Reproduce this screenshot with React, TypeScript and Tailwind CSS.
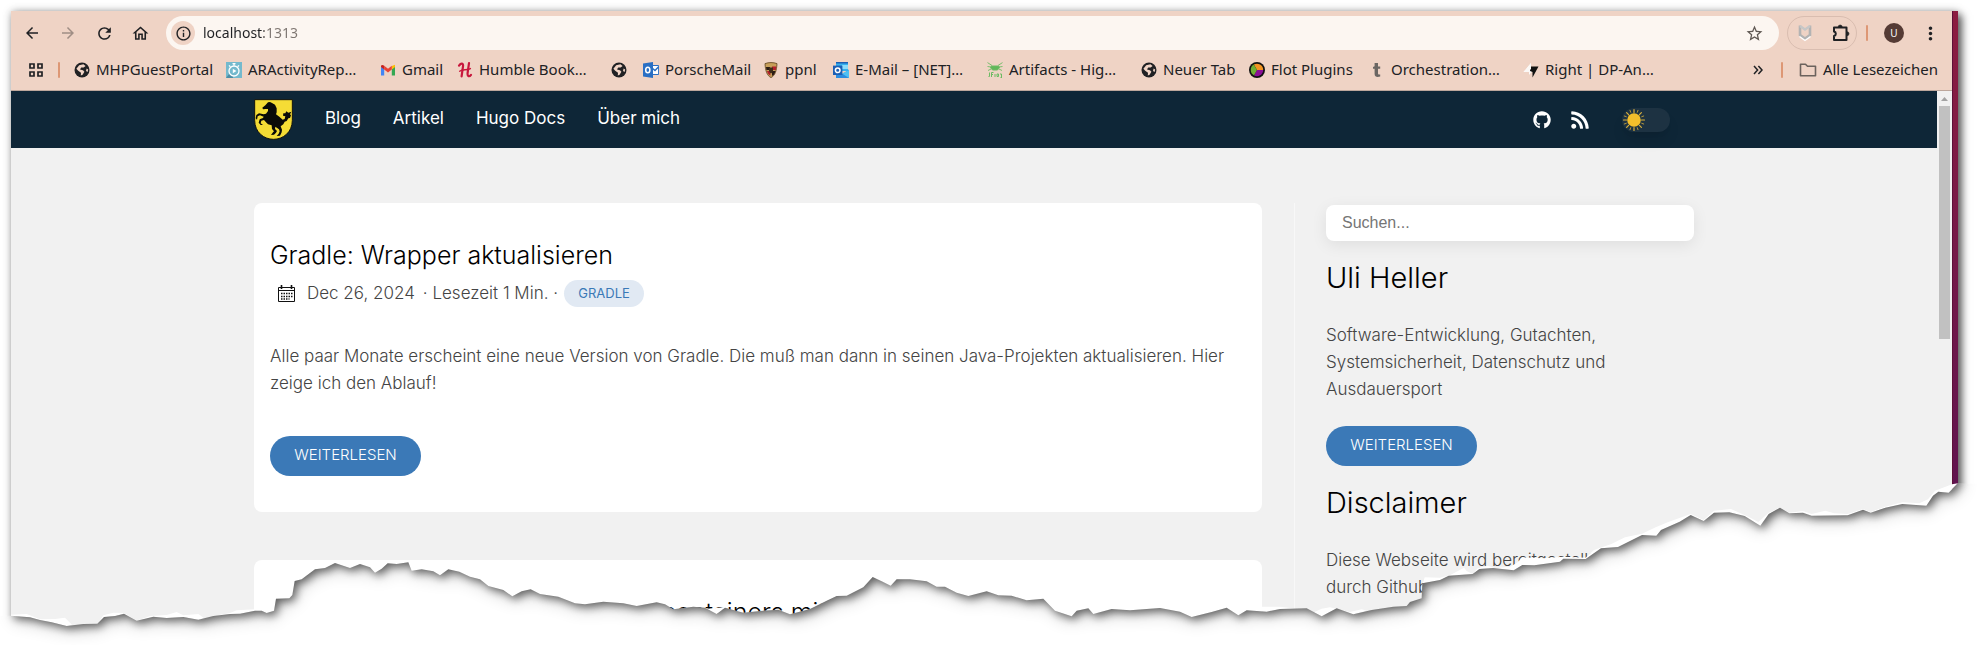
import type { ReactNode } from "react";
import {
  MdArrowBack,
  MdArrowForward,
  MdInfoOutline,
  MdMoreVert,
  MdOutlineHome,
  MdRefresh,
  MdStarOutline,
} from "react-icons/md";
import { FaGithub, FaRss } from "react-icons/fa";

/* ---------- Favicons ---------- */

const Globe = () => (
  <svg viewBox="0 0 16 16" className="size-4">
    <circle cx="8" cy="8" r="7.5" fill="#202124" />
    <path d="M5.2 3.2 9.4 2.2 11.6 4 9.6 5.6 7.2 5.4 6 7.6 9 8.2 10.4 9.8 8.6 12.8 6.8 13.6 7 10.8 4.2 8.8 2.4 6.8Z" fill="#f0d4c6" />
    <path d="M12.6 6.6 14.2 7.4 13.6 10 12 9Z" fill="#f0d4c6" />
  </svg>
);

const Stopwatch = () => (
  <svg viewBox="0 0 16 16" className="size-4">
    <path d="M0 0h16v16H0z" fill="#74b9cd" />
    <path d="M0 16 3 12l4 2v2Z" fill="#4d8ea6" />
    <circle cx="8" cy="9" r="5" fill="none" stroke="#fff" strokeWidth="1.3" />
    <path d="M6.5 1.6h3M8 1.6v2M3 3.4l1.4 1.4M13 3.4l-1.4 1.4" stroke="#fff" strokeWidth="1.3" />
    <path d="M6.8 6.8 10.4 9l-3.6 2.2Z" fill="#fff" />
  </svg>
);

const Gmail = () => (
  <svg viewBox="0 0 16 16" className="size-4">
    <path d="M1 4.4V13.5h3.2V7.2Z" fill="#4285f4" />
    <path d="M15 4.4V13.5h-3.2V7.2Z" fill="#34a853" />
    <path d="M11.8 4 15 2.8V5l-3.2 2.6Z" fill="#fbbc04" />
    <path d="M4.2 3.8 8 6.8l3.8-3V7.6L8 10.6 4.2 7.6Z" fill="#ea4335" />
    <path d="M1 4.4C1 2.6 2.8 2.4 4.2 3.8V7.6L1 5Z" fill="#c5221f" />
  </svg>
);

const Humble = () => (
  <svg viewBox="0 0 16 16" className="size-4" fill="none" stroke="#c8173c" strokeLinecap="round">
    <path d="M2 3.600C4 .8 6.600 .8 6 4.4L4.600 14.400" strokeWidth="2.200" />
    <path d="M12 1.200 10.600 11C10.200 14.800 12.400 15 14 12.800" strokeWidth="2.200" />
    <path d="M2.600 9.200C6 6.800 9.600 8.800 13.400 6.600" strokeWidth="1.400" />
  </svg>
);

const OutlookClassic = () => (
  <svg viewBox="0 0 16 16" className="size-4">
    <path d="M8 3.5h7.6v9H8z" fill="#fff" stroke="#2a6fc4" />
    <path d="m9 6 3 2.6L15.4 5" fill="none" stroke="#2a6fc4" strokeWidth="1.4" />
    <path d="M0 1.6 10 0v16L0 14.4Z" fill="#2a6fc4" />
    <ellipse cx="4.8" cy="8" rx="2.1" ry="2.8" fill="none" stroke="#fff" strokeWidth="1.5" />
  </svg>
);

const Crest = () => (
  <svg viewBox="0 0 16 16" className="size-4">
    <path d="M2 1.6C6 .2 10 .2 14 1.6 13.6 9 12 13.6 8 15.6 4 13.6 2.4 9 2 1.6Z" fill="#c79f5a" stroke="#5e4320" strokeWidth=".8" />
    <path d="M3 5h4v3H3.4ZM9 9h3.6l-1.4 3.4L9 14Z" fill="#2a1a14" />
    <path d="M9 4.4h4.2L13 8H9ZM4 9h3.4v4.6C5.4 12.6 4.6 11 4 9Z" fill="#b3202c" />
    <path d="M6 5.6h4V9c-.4 1.2-1 1.8-2 2.4C7 10.800 6.400 10.200 6 9Z" fill="#3f2c18" />
  </svg>
);

const Outlook = () => (
  <svg viewBox="0 0 16 16" className="size-4">
    <path d="M3 0h12v9H3z" fill="#35b0ee" />
    <path d="M3 0h12v1.500H3z" fill="#1c5fb4" />
    <path d="M9 3h6v4H9z" fill="#8bdcfb" />
    <path d="M3 7.600 9.600 12 16 7.600V16H3Z" fill="#2b8de0" />
    <path d="M9 11.600 16 16V8Z" fill="#4fc0f3" />
    <path d="M0 3.600h9.400V13H0z" fill="#1c5fb4" />
    <circle cx="4.700" cy="8.300" r="2.300" fill="none" stroke="#fff" strokeWidth="1.500" />
  </svg>
);

const Frog = () => (
  <svg viewBox="0 0 16 16" className="size-4" fill="none" stroke="#6cbb63">
    <path d="M.5.600 5 3.500M15.500.600 11 3.500M.5 4.500 4 5M15.500 4.500 12 5M1 8.500l3-1.500M15 8.500l-3-1.500" strokeWidth=".9" />
    <path d="M4.500 4h7l1 1.500-2 2.500h-5l-2-2.500Z" fill="#62b75a" />
    <path d="M2.500 10.500v4h-1M4.500 15v-4.500h2M4.500 12.500h1.500M8 15v-3M10 12h1.500v2.500H10ZM13 12h1.500v4H13" strokeWidth="1" />
  </svg>
);

const Flot = () => (
  <svg viewBox="0 0 16 16" className="size-4">
    <circle cx="8" cy="8" r="8" fill="#111" />
    <path d="M8 8 4.800 2.600A6.200 6.200 0 0 1 14.200 8Z" fill="#f29423" />
    <path d="M8 8h6.200A6.200 6.200 0 0 1 5 13.400Z" fill="#8b0f96" />
    <path d="M8 8 5 13.400A6.200 6.200 0 0 1 4.800 2.600Z" fill="#6fae35" />
  </svg>
);

const LetterT = () => (
  <svg viewBox="0 0 16 16" className="size-4">
    <path d="M5.600 1h3.400v3.500h2.200V6.700H9v4.600c0 1.200.8 1.500 2.200 1.100v2.200C8 15.600 5.600 14.800 5.600 12V6.700H4V4.900L5.600 4.200Z" fill="#6b6663" />
  </svg>
);

const Bolt = () => (
  <svg viewBox="0 0 16 16" className="size-4">
    <path d="M8 1v6h3L6 13v-3H.5Z" fill="#fbf8f6" />
    <path d="M7.500 4.500H15.500L9.500 15.500V10L7 9Z" fill="#111" />
    <path d="M8 1v6L4 10H.5Z" fill="#fbf8f6" />
  </svg>
);

/* ---------- Other drawings ---------- */

const Folder = () => (
  <svg viewBox="0 0 18 16" className="h-4 w-[18px]" fill="none" stroke="#6b625d" strokeWidth="1.600">
    <path d="M1.500 2.300h5l2 2h8v9.400h-15Z" strokeLinejoin="round" />
  </svg>
);

const Puzzle = () => (
  <svg viewBox="0 0 18 18" className="size-[18px]">
    <path d="M2 3.500h12.500v12.500H2V12a2.300 2.300 0 0 0 0-4.500Z" fill="none" stroke="#202124" strokeWidth="2" strokeLinejoin="round" />
    <path d="M6.200 3a2 2 0 0 1 4 0ZM15 7.700a2 2 0 0 1 0 4Z" fill="#202124" stroke="#202124" strokeWidth=".6" />
  </svg>
);

const McShield = () => (
  <svg viewBox="0 0 14 18" className="h-[18px] w-3.5" fill="none">
    <path d="M2 1.500V11l5 3.500L12 11V1.500" stroke="#b3b3b3" strokeWidth="2.600" />
    <path d="M2 2 7 5.500 12 2" stroke="#c7c7c7" strokeWidth="2.400" />
    <path d="M1.500 12.500 7 16.500l5.500-4" stroke="#fff" strokeWidth="1.400" />
  </svg>
);

const Shield = () => (
  <svg viewBox="0 0 117 123" className="h-[41px] w-[39px]">
    <path d="M2 2h113v62c0 36-28 57-56.500 57S2 100 2 64Z" fill="#f5dc35" stroke="#14140f" strokeWidth="3" />
    <path
      d="M27 31 25 26 34 19 42 10 48 9 54 12 63 17 68 28 68 40 66 46 76 53 86 62 92 60 94 52 87 50 88 43 94 43 97 37 103 41 112 38 108 46 111 49 108 57 103 58 98 66 92 68 88 76 80 82 84 92 83 100 78 110 68 111 74 104 77 97 75 91 64 83 63 90 69 96 66 101 60 107 51 108 57 100 60 97 54 90 53 79 42 76 36 70 30 63 22 65 20 73 27 78 20 78 14 71 17 61 27 57 29 53 18 49 11 52 9 62 5 58 7 48 15 43 29 46 36 44 42 36 42 30 35 30Z"
      fill="#0a0a08"
    />
  </svg>
);

const Sun = () => (
  <svg viewBox="0 0 24 24" className="size-6">
    <g stroke="#d9b03a" strokeWidth="1.200" strokeLinecap="round">
      <path d="M12 1.500v3M12 19.500v3M1.500 12h3M19.500 12h3M4.600 4.600l2 2M17.400 17.400l2 2M4.600 19.400l2-2M17.400 6.600l2-2" />
      <path d="M8 2.300l.7 2M15.300 19.700l.7 2M2.300 16l2-.7M19.700 8.700l2-.7M2.300 8l2 .7M19.700 15.300l2 .7M8 21.700l.7-2M15.300 4.300l.7-2" strokeWidth=".8" />
    </g>
    <circle cx="12" cy="12" r="6.800" fill="#f4bf2b" />
  </svg>
);

const Calendar = () => (
  <svg viewBox="0 0 17 17" className="size-[17px]" fill="none" stroke="#111">
    <path d="M.5 2.500h16v14H.5ZM.5 5.500h16" />
    <path d="M3.500 0v4M13.500 0v4" strokeWidth="1.600" />
    <path d="M3 8.500h11.500M3 11.500h11.500M3 14h8.500" strokeWidth="1.500" strokeDasharray="1.500 1" />
  </svg>
);

/* ---------- Torn paper edge ---------- */

type Point = [number, number];

const section = (dx: number, dy: number, sx: number, pts: Point[]): Point[] =>
  pts.map(([x, y]) => [Math.round(x * sx + dx), y + dy]);

const outerEdge: Point[] = [
  ...section(0, 0, 1, [
    [33, 407], [90, 412], [120, 420], [155, 427], [200, 438], [250, 432], [292, 431], [312, 411], [345, 408], [372, 401],
    [410, 422], [460, 410], [500, 414], [550, 411], [595, 419], [640, 408], [690, 402], [720, 401], [765, 392], [785, 392],
    [800, 399], [822, 392], [828, 356], [868, 355], [877, 345], [884, 303], [905, 298], [945, 268], [975, 264], [1005, 249],
    [1050, 264], [1080, 252], [1110, 262], [1125, 278], [1145, 266], [1163, 250], [1190, 252], [1225, 247], [1235, 272],
    [1265, 268], [1300, 274], [1320, 286], [1345, 268], [1378, 275], [1410, 290],
  ]),
  ...section(1440, 0, 1, [
    [0, 298], [25, 318], [70, 330], [97, 349], [125, 334], [152, 328], [180, 342], [235, 350], [285, 370], [315, 373],
    [370, 365], [430, 370], [470, 378], [530, 367], [555, 373], [580, 388], [640, 380], [675, 383], [710, 402], [735, 383],
    [790, 398], [840, 393], [895, 389], [930, 403], [990, 387], [1040, 362], [1070, 348], [1100, 347], [1150, 322],
    [1178, 291], [1205, 304], [1232, 317], [1250, 298], [1290, 298], [1340, 304], [1370, 320], [1395, 320], [1430, 338],
  ]),
  ...section(2880, 0, 1, [
    [25, 348], [80, 334], [115, 346], [155, 347], [200, 361], [250, 356], [285, 392], [335, 409], [350, 392], [385, 385],
    [400, 402], [455, 387], [510, 391], [600, 384], [660, 395], [695, 411], [755, 396], [800, 383], [835, 406], [860, 391],
    [920, 395], [960, 387], [1040, 385], [1085, 409], [1130, 385], [1180, 403], [1235, 390], [1300, 380], [1340, 378],
    [1350, 366], [1385, 355], [1387, 310],
  ]),
  ...section(4320, -120, 1.0274, [
    [0, 420], [25, 407], [95, 402], [115, 387], [155, 384], [215, 391], [240, 375], [275, 376], [350, 365], [360, 356],
    [425, 357], [470, 325], [520, 321], [590, 285], [632, 287], [645, 270], [700, 245], [732, 225], [770, 243], [800, 218],
    [845, 217], [890, 228], [935, 257], [960, 222], [993, 203], [1020, 220], [1060, 218], [1085, 227], [1190, 226],
    [1235, 209], [1258, 218], [1300, 203], [1350, 192], [1420, 197], [1440, 167], [1455, 155], [1485, 158], [1513, 130],
  ]),
];

const paperFibres: Point[][] = [
  section(0, 0, 1, [[33, 404], [80, 402], [120, 418], [165, 417], [195, 413], [216, 434], [200, 438], [155, 427], [120, 422], [90, 412], [33, 409]]),
  section(0, 0, 1, [[296, 428], [310, 406], [340, 398], [372, 399], [410, 422], [372, 403], [345, 408], [314, 412]]),
  section(0, 0, 1, [[410, 422], [450, 408], [500, 405], [530, 396], [550, 406], [595, 402], [612, 414], [595, 419], [550, 411], [500, 414]]),
  section(0, 0, 1, [[640, 408], [690, 399], [710, 391], [765, 388], [765, 392], [720, 401], [690, 403]]),
  section(1440, 0, 1, [[672, 384], [690, 386], [728, 382], [735, 385], [710, 402]]),
  section(2880, 0, 1, [[906, 380], [960, 380], [1010, 386], [960, 389], [920, 396], [906, 394]]),
  section(2880, 0, 1, [[1055, 400], [1085, 386], [1110, 382], [1135, 388], [1170, 396], [1205, 388], [1220, 392], [1180, 403], [1150, 400], [1110, 402], [1085, 409]]),
  section(4320, -120, 1.0274, [
    [-50, 430], [-45, 412], [0, 413], [30, 405], [70, 383], [78, 393], [95, 402], [110, 385], [140, 377], [160, 384],
    [205, 380], [225, 368], [240, 352], [300, 355], [360, 350], [425, 353], [450, 330], [500, 312], [540, 292], [590, 281],
    [630, 262], [665, 247], [732, 222], [770, 240], [800, 212], [850, 207], [900, 230], [930, 246], [960, 218], [993, 203],
    [1020, 218], [1060, 213], [1085, 222], [1125, 212], [1150, 220], [1190, 222], [1235, 207], [1258, 216], [1300, 200],
    [1350, 187], [1400, 190], [1425, 178], [1445, 152], [1495, 133], [1513, 130], [1485, 158], [1455, 157], [1420, 197],
    [1350, 194], [1300, 205], [1258, 220], [1235, 211], [1190, 228], [1085, 229], [1020, 222], [993, 205], [960, 224],
    [935, 259], [890, 230], [845, 219], [800, 220], [770, 245], [732, 227], [700, 247], [645, 272], [632, 289], [590, 287],
    [520, 323], [470, 327], [425, 359], [360, 358], [350, 367], [275, 378], [240, 377], [215, 393], [155, 386], [115, 389],
    [95, 404], [25, 409], [0, 422],
  ]),
];

const toPoints = (pts: Point[]) => pts.map((p) => p.join(",")).join(" ");

const edgePoints = toPoints(outerEdge);

const TornEdge = () => (
  <svg
    viewBox="0 0 5931 495"
    preserveAspectRatio="none"
    aria-hidden="true"
    className="pointer-events-none absolute inset-x-0 bottom-0 h-[165px] w-full"
  >
    <defs>
      <clipPath id="below">
        <polygon points={`0,407 ${edgePoints} 5931,10 5931,495 0,495`} />
      </clipPath>
      <filter id="soft" x="-5%" y="-50%" width="110%" height="200%">
        <feGaussianBlur stdDeviation="13" />
      </filter>
      <filter id="haze" x="-5%" y="-50%" width="110%" height="200%">
        <feGaussianBlur stdDeviation="26" />
      </filter>
    </defs>
    {paperFibres.map((f, i) => (
      <polygon key={i} points={toPoints(f)} fill="#fff" />
    ))}
    <g clipPath="url(#below)">
      <path d="M0 0h5931v495H0z" fill="#fff" />
      <polygon points={`33,-300 ${edgePoints} 5874,-300`} transform="translate(9 15)" fill="#000" opacity=".2" filter="url(#haze)" />
      <polygon points={`33,-300 ${edgePoints} 5874,-300`} transform="translate(9 9)" fill="#000" opacity=".55" filter="url(#soft)" />
    </g>
  </svg>
);

/* ---------- Browser chrome ---------- */

const IconButton = ({ label, children, dim = false }: { label: string; children: ReactNode; dim?: boolean }) => (
  <button type="button" aria-label={label} className={dim ? "flex size-9 items-center justify-center text-[#a08e85]" : "flex size-9 items-center justify-center text-[#202124]"}>
    {children}
  </button>
);

const bookmarks: { icon: ReactNode; text?: string; width: string }[] = [
  { icon: <Globe />, text: "MHPGuestPortal", width: "w-[136px]" },
  { icon: <Stopwatch />, text: "ARActivityRep…", width: "w-[138px]" },
  { icon: <Gmail />, text: "Gmail", width: "w-[61px]" },
  { icon: <Humble />, text: "Humble Book…", width: "w-[138px]" },
  { icon: <Globe />, width: "w-4" },
  { icon: <OutlookClassic />, text: "PorscheMail", width: "w-[104px]" },
  { icon: <Crest />, text: "ppnl", width: "w-[54px]" },
  { icon: <Outlook />, text: "E-Mail – [NET]…", width: "w-[138px]" },
  { icon: <Frog />, text: "Artifacts - Hig…", width: "w-[138px]" },
  { icon: <Globe />, text: "Neuer Tab", width: "w-[92px]" },
  { icon: <Flot />, text: "Flot Plugins", width: "w-[104px]" },
  { icon: <LetterT />, text: "Orchestration…", width: "w-[138px]" },
  { icon: <Bolt />, text: "Right | DP-An…", width: "w-[138px]" },
];

const Divider = () => <span className="h-4 w-0.5 rounded-full bg-[#dd9775]" />;

const Chrome = () => (
  <header className="border-b border-[#bda79c] bg-[#efd3c5] font-['Noto_Sans',sans-serif] text-[15px] text-[#202124]">
    <div className="flex items-center pt-1 pr-1 pl-[3px]">
      <nav aria-label="Navigation" className="flex">
        <IconButton label="Zurück"><MdArrowBack size={18} /></IconButton>
        <IconButton label="Vorwärts" dim><MdArrowForward size={18} /></IconButton>
        <IconButton label="Neu laden"><MdRefresh size={19} /></IconButton>
        <IconButton label="Startseite"><MdOutlineHome size={19} /></IconButton>
      </nav>
      <div className="ml-2 flex h-[34px] flex-1 items-center rounded-full bg-[#fcf6f1] pr-[15px] pl-[5px]">
        <button type="button" aria-label="Websiteinformationen" className="flex size-6 items-center justify-center rounded-full bg-[#efd3c5]">
          <MdInfoOutline size={17} />
        </button>
        <input
          aria-label="Adresse"
          defaultValue="localhost:1313"
          className="ml-2 min-w-0 flex-1 bg-[linear-gradient(to_right,#202124_61px,#7d7570_61px)] bg-clip-text text-sm text-transparent outline-none"
        />
        <button type="button" aria-label="Lesezeichen hinzufügen" className="text-[#5f5853]"><MdStarOutline size={19} /></button>
      </div>
      <div className="ml-2 flex h-[34px] w-[70px] items-center justify-between rounded-full border border-[#d9bdb0] pr-1.5 pl-2.5">
        <button type="button" aria-label="McAfee"><McShield /></button>
        <button type="button" aria-label="Erweiterungen"><Puzzle /></button>
      </div>
      <div className="flex items-center pl-[9px]">
        <Divider />
        <button type="button" aria-label="Profil" className="ml-4 flex size-5 items-center justify-center rounded-full bg-[#553b35] text-[10px] text-white">U</button>
        <span className="ml-2"><IconButton label="Menü"><MdMoreVert size={21} /></IconButton></span>
      </div>
    </div>
    <div className="flex h-[39px] items-center pr-3.5 pb-0.5 pl-[17px]">
      <button type="button" aria-label="Apps">
        <svg viewBox="0 0 16 16" className="size-4" fill="none" stroke="#202124" strokeWidth="1.700">
          <path d="M2 2h4v4H2zM10 2h4v4h-4zM2 10h4v4H2zM10 10h4v4h-4z" />
        </svg>
      </button>
      <span className="mr-[14px] ml-[14px] flex"><Divider /></span>
      <ul className="flex min-w-0 flex-1 gap-4 overflow-hidden">
        {bookmarks.map((b, i) => (
          <li key={i} className={`${b.width} shrink-0`}>
            <a href="#" aria-label={b.text ?? "Lesezeichen"} className="flex h-6 items-center gap-1.5 whitespace-nowrap">
              <span className="shrink-0">{b.icon}</span>
              {b.text}
            </a>
          </li>
        ))}
      </ul>
      <button type="button" aria-label="Weitere Lesezeichen" className="mr-[18px]">
        <svg viewBox="0 0 10 10" className="size-2.5" fill="none" stroke="#202124" strokeWidth="1.500">
          <path d="m1 1 3.600 4L1 9M5.400 1 9 5 5.400 9" />
        </svg>
      </button>
      <Divider />
      <a href="#" className="ml-4 flex items-center gap-1.5 whitespace-nowrap"><Folder />Alle Lesezeichen</a>
    </div>
  </header>
);

/* ---------- Website ---------- */

const ReadMore = () => (
  <a href="#" className="flex h-10 w-[151px] items-center justify-center rounded-full bg-[#3b79b7] pb-0.5 text-[15px] font-light text-white">WEITERLESEN</a>
);

const SiteNav = () => (
  <div className="bg-[#0e2637]">
    <div className="mx-auto flex h-[57px] max-w-[1440px] items-center">
      <a href="#" aria-label="Startseite"><Shield /></a>
      <nav className="ml-8 flex flex-1 gap-8 pb-0.5 text-[17px] text-white">
        <a href="#">Blog</a>
        <a href="#">Artikel</a>
        <a href="#">Hugo Docs</a>
        <a href="#">Über mich</a>
      </nav>
      <div className="flex items-center text-white">
        <a href="#" aria-label="GitHub"><FaGithub size={18} /></a>
        <a href="#" aria-label="RSS" className="ml-[19px]"><FaRss size={20} /></a>
        <label className="mr-6 ml-8 flex h-6 w-12 cursor-pointer items-center rounded-full bg-[#1d3242] shadow-lg">
          <input type="checkbox" aria-label="Dunkles Design" className="sr-only" />
          <Sun />
        </label>
      </div>
    </div>
  </div>
);

const SidebarBlock = ({ title, text, action = false }: { title: string; text: string; action?: boolean }) => (
  <section className="pt-[17px]">
    <h2 className="text-[29px] leading-10 font-light text-black">{title}</h2>
    <p className="mt-6 mb-[23px] pr-16 text-[17px] leading-[27px] font-light">{text}</p>
    {action && <ReadMore />}
  </section>
);

const Page = () => (
  <div className="min-w-0 flex-1 bg-[#f1f1f1] font-['Inter',sans-serif] text-[#444]">
    <SiteNav />
    <div className="mx-auto flex max-w-[1440px] pt-[55px]">
      <main className="flex w-[70%] flex-col gap-12">
        <article className="rounded-lg bg-white px-4 pt-8 pb-9">
          <h2 className="text-[25px] leading-10 font-light text-black">Gradle: Wrapper aktualisieren</h2>
          <div className="mt-[5px] flex h-[27px] items-center pl-2 text-[17px] font-light">
            <Calendar />
            <span className="ml-3">Dec 26, 2024</span>
            <span className="mr-1.5 ml-2">· Lesezeit 1 Min. ·</span>
            <a href="#" className="flex h-[27px] w-20 items-center justify-center rounded-full bg-[#e1e9f3] text-[13px] font-normal text-[#3b79b7]">GRADLE</a>
          </div>
          <p className="mt-9 mb-[39px] text-[17px] leading-[27px] font-light">
            Alle paar Monate erscheint eine neue Version von Gradle. Die muß man dann in seinen Java-Projekten aktualisieren. Hier zeige ich den Ablauf!
          </p>
          <ReadMore />
        </article>
        <article className="h-[309px] shrink-0 rounded-lg bg-white px-4 pt-8">
          <h2 className="pl-[392px] text-[25px] leading-10 font-light text-black">containers mit</h2>
        </article>
      </main>
      <aside className="ml-8 flex-1 border-l border-[#f8f8f8] pt-0.5 pl-[31px]">
        <input
          type="search"
          aria-label="Suchen"
          placeholder="Suchen..."
          className="block h-9 w-full rounded-lg bg-white px-4 font-['Liberation_Sans',sans-serif] text-base shadow-[0_4px_16px_rgba(0,0,0,0.08)] outline-none placeholder:text-[#757575]"
        />
        <SidebarBlock title="Uli Heller" text="Software-Entwicklung, Gutachten, Systemsicherheit, Datenschutz und Ausdauersport" action />
        <SidebarBlock title="Disclaimer" text="Diese Webseite wird bereitgestellt durch Github Pages" />
      </aside>
    </div>
  </div>
);

const Scrollbar = () => (
  <div className="flex w-[15px] flex-col items-center bg-[#f1f1f1]" aria-hidden="true">
    <svg viewBox="0 0 15 15" className="size-[15px]"><path d="M4 10h7L7.500 6Z" fill="#a3a3a3" /></svg>
    <div className="h-[233px] w-[11px] bg-[#c1c1c1]" />
  </div>
);

export default function App() {
  return (
    <div className="relative h-screen overflow-hidden bg-white pt-[11px] pr-[19px] pl-[11px]">
      <div className="flex h-full shadow-[0_0_8px_rgba(0,0,0,0.25),4px_4px_8px_rgba(0,0,0,0.6)]">
        <div className="flex min-w-0 flex-1 flex-col">
          <Chrome />
          <div className="flex min-h-0 flex-1">
            <Page />
            <Scrollbar />
          </div>
        </div>
        <div className="w-1.5 border-l border-[#5d0f38] bg-linear-to-b from-[#8c1c40] to-[#530d52]" />
      </div>
      <TornEdge />
    </div>
  );
}
